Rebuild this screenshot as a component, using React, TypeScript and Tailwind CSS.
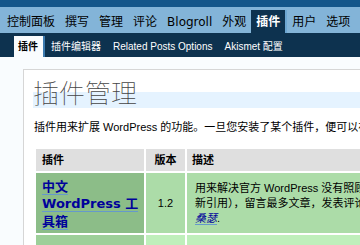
import React from "react";

const menu = ["控制面板", "撰写", "管理", "评论", "Blogroll", "外观", "插件", "用户", "选项"];
const sub = ["插件", "插件编辑器", "Related Posts Options", "Akismet 配置"];

export default function App() {
  return (
    <div className="w-[360px] h-[245px] overflow-hidden bg-[#f9fcfe] font-['Liberation_Sans','Noto_Sans_CJK_SC',sans-serif]">
      <div className="w-[760px]">
        <div className="h-[7px] bg-[#14568a]" />
        <div className="h-[26px] bg-[#83b4d8] flex items-end pl-[2px] font-['DejaVu_Sans','Noto_Sans_CJK_SC',sans-serif] text-[12px]">
          {menu.map((m) =>
            m === "插件" ? (
              <div
                key={m}
                className="h-[23px] pl-[5px] pr-[5px] flex items-center pt-[1px] bg-[#0d324f] text-white font-bold border-r-2 border-[#6da6d1]"
              >
                {m}
              </div>
            ) : (
              <div key={m} className="h-[23px] px-[5px] flex items-center pt-[1px] text-black">
                {m}
              </div>
            )
          )}
        </div>
        <div className="h-[24px] bg-[#0d324f] flex items-end pl-[14px] text-[10px]">
          {sub.map((s, i) =>
            i === 0 ? (
              <div
                key={s}
                className="h-[21px] pl-[4px] pr-[5px] flex items-center bg-[#f9fcfe] text-black font-bold border-r-2 border-[#3c7bb0]"
              >
                {s}
              </div>
            ) : (
              <div key={s} className="h-[21px] px-[6px] flex items-center text-white">
                {s}
              </div>
            )
          )}
        </div>
        <div className="mt-[12px] ml-[23px] bg-white border border-[#d6d6d6] pl-[10px] pt-[9px] pb-[20px]">
          <h2 className="-ml-px h-[29px] text-[26px] leading-[26px] font-thin text-[#444] font-['Noto_Sans_CJK_SC',sans-serif] bg-[linear-gradient(to_bottom,transparent_13px,#e5f3ff_13px)]">
            插件管理
          </h2>
          <p className="mt-[12px] text-[11px] leading-[15px] text-black whitespace-nowrap">
            插件用来扩展 WordPress 的功能。一旦您安装了某个插件，便可以在这里启用或停用它。
          </p>
          <table className="mt-[12px] table-fixed border-separate border-spacing-[2px] w-[600px] text-[11px] text-black">
            <colgroup>
              <col className="w-[108px]" />
              <col className="w-[39px]" />
              <col />
            </colgroup>
            <thead>
              <tr className="h-[22px] bg-[#dfdfdf]">
                <th className="w-[108px] text-left pl-[6px] font-bold">插件</th>
                <th className="w-[39px] text-center font-bold">版本</th>
                <th className="text-left pl-[5px] font-bold">描述</th>
              </tr>
            </thead>
            <tbody>
              <tr className="h-[60px]">
                <td className="bg-[#8cbd88] pl-[6px] pr-[4px] align-middle pt-[2px]">
                  <span className="text-[13px] leading-[17.5px] font-bold font-['DejaVu_Sans','Noto_Sans_CJK_SC',sans-serif]">
                    <a className="text-[#00019b] border-b border-[#6699cc]">中文 WordPress 工具箱</a>
                  </span>
                </td>
                <td className="bg-[#acdca8] text-center align-middle">1.2</td>
                <td className="bg-[#acdca8] pl-[8px] align-middle leading-[15px] whitespace-nowrap overflow-hidden">
                  用来解决官方 WordPress 没有照顾到中文的一些问题，如：日志摘要，随机文章，相关文章，最
                  <br />
                  新引用），留言最多文章，发表评论最多的朋友等等。作者：
                  <br />
                  <a className="italic text-[#00019b] border-b border-[#6699cc]">桑瑟</a>.
                </td>
              </tr>
              <tr className="h-[40px]">
                <td className="bg-[#9dcf99]" />
                <td className="bg-[#bfefbb]" />
                <td className="bg-[#bfefbb]" />
              </tr>
            </tbody>
          </table>
        </div>
      </div>
    </div>
  );
}
